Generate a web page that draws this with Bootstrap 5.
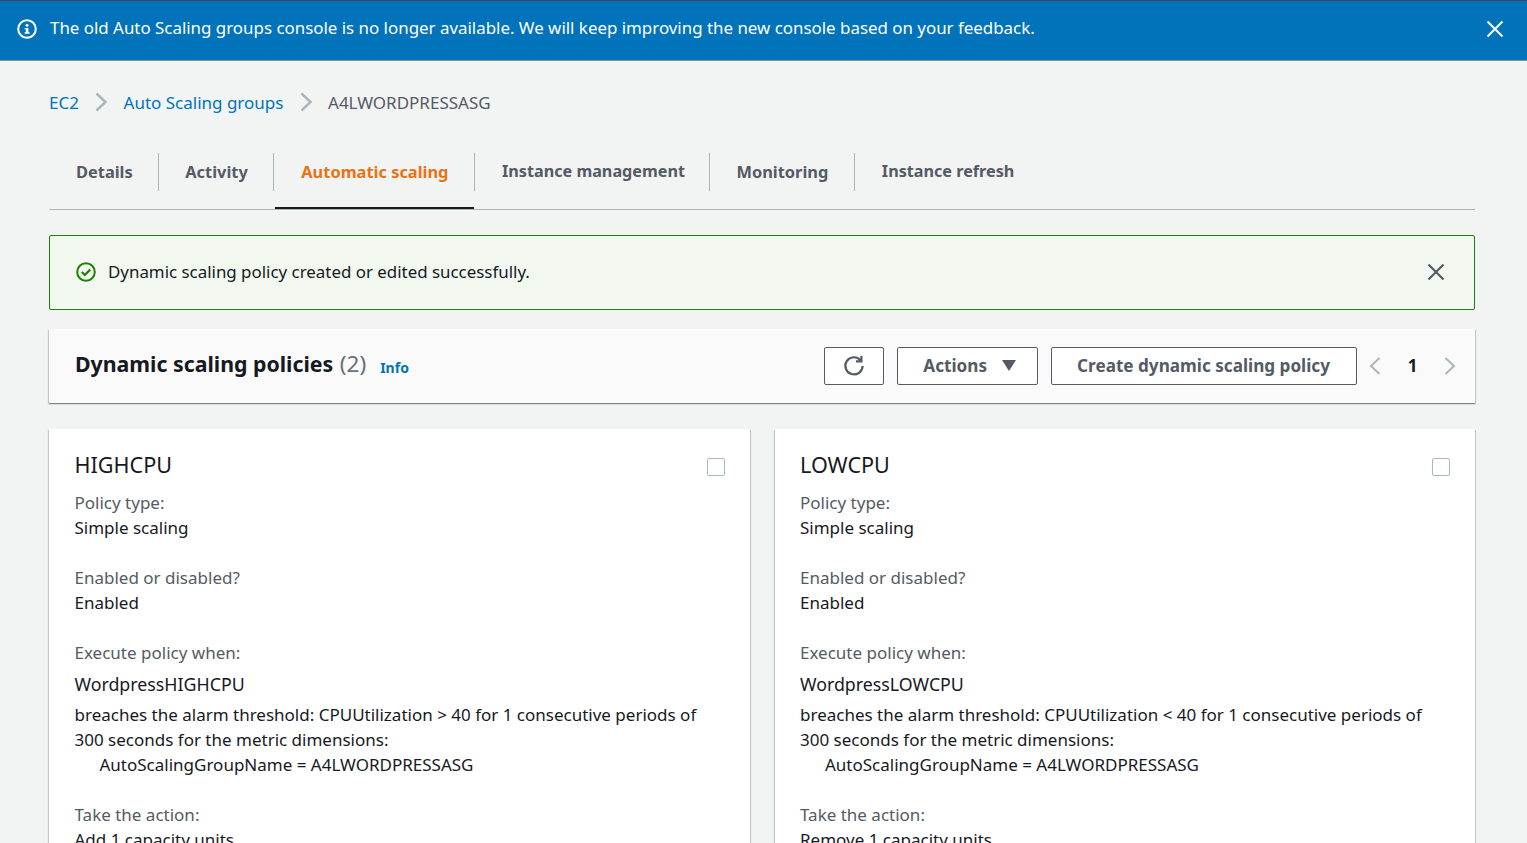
<!DOCTYPE html>
<html lang="en">

<head>
    <meta charset="UTF-8" />
    <meta name="viewport" content="width=device-width, initial-scale=1.0" />
    <title>A4LWORDPRESSASG - Auto Scaling groups</title>
    <link href="https://cdn.jsdelivr.net/npm/bootstrap@5.3.0/dist/css/bootstrap.min.css" rel="stylesheet">
    <style>
        html, body { height: 843px; overflow: hidden; }
        body { background: #f2f3f3; color: #16191f; font-family: "Noto Sans", "Liberation Sans", sans-serif; font-size: 17px; line-height: 25px; }
        .top-flash { height: 61px; background: #0073bb; border-top: 1px solid #414750; border-bottom: 1px solid #879596; color: #fff; padding: 0 23px 3px 17px; }
        .top-flash .msg { font-size: 16.9px; margin-left: 13px; padding-bottom: 3px; }
        .plain-x { background: none; border: 0; padding: 0; line-height: 0; }
        .page-wrap { padding: 0 52px 0 49px; }
        .crumbs { height: 84px; padding-bottom: 2px; font-size: 17px; }
        .crumbs a { color: #0073bb; text-decoration: none; }
        .crumbs .here { color: #545b64; }
        .crumbs svg { margin: 0 16.3px; }
        .tab-strip { height: 65px; border-bottom: 1px solid #aab7b8; padding-bottom: 18px; align-items: stretch; }
        .tab-item { position: relative; padding: 0 25.5px 2px 26px; font-weight: 700; color: #545b64; font-size: 16.4px; display: flex; align-items: center; border-left: 1px solid #aab7b8; margin-top: 8px; height: 38px; }
        .tab-item:first-child { border-left: 0; padding-left: 27px; }
        .tab-item.on { color: #ec7211; padding-left: 27px; }
        .tab-item.wide-name { font-size: 16.2px; padding-left: 27px; padding-right: 24.5px; }
        .tab-item.on::after { content: ""; position: absolute; left: 1px; right: 0; bottom: -18px; height: 2px; background: #16191f; }
        .ok-flash { height: 75px; margin-top: 25px; background: #f2f8f0; border: 1px solid #1d8102; border-radius: 2px; padding: 0 29px 2px 26px; }
        .ok-flash .msg { margin-left: 12px; font-size: 16.9px; }
        .policy-head { height: 74px; margin-top: 19px; background: #fafafa; box-shadow: 0 1px 1px 0 rgba(0,28,36,.3), 1px 1px 1px 0 rgba(0,28,36,.15), -1px 1px 1px 0 rgba(0,28,36,.15); padding: 0 19px 1px 26px; }
        .policy-head h2 { font-size: 21.3px; font-weight: 700; line-height: 30px; margin: 0 0 4px; }
        .policy-head h2 span { font-weight: 400; font-size: 22.5px; color: #687078; margin-left: 1px; }
        .info-link { color: #0073bb; font-size: 14px; font-weight: 700; text-decoration: none; margin-left: 14px; margin-top: 3px; }
        .head-tools { gap: 12.5px; }
        .btn.aws-btn { height: 38px; background: #fff; border: 1px solid #545b64; border-radius: 2px; color: #545b64; font-weight: 700; font-size: 17.15px; line-height: 1; padding: 0 25.5px; }
        .btn.aws-btn.reload { width: 60px; padding: 0; }
        .btn.aws-btn.drop { padding-right: 21px; }
        .btn.aws-btn.drop svg { margin-left: 15px; }
        .pager { width: 87px; color: #16191f; font-weight: 700; }
        .policy-grid { display: grid; grid-template-columns: 1fr 1fr; gap: 25px; margin-top: 26px; }
        .policy-card { background: #fff; border: 0; border-radius: 0; height: 500px; padding: 21px 25px 21px 25.5px; box-shadow: 0 1px 1px 0 rgba(0,28,36,.3), 1px 1px 1px 0 rgba(0,28,36,.15), -1px 1px 1px 0 rgba(0,28,36,.15); }
        .policy-card h3 { font-size: 21.6px; font-weight: 400; line-height: 30px; margin: 0; }
        .tick-box { width: 18px; height: 18px; border: 1px solid #aab7b8; border-radius: 2px; background: #fff; margin-top: 8px; }
        .lbl { color: #545b64; }
        .policy-card p { margin: 0; }
        .policy-card p.gap-top { margin-top: 25px; }
        .policy-card p.lbl-first { margin-top: 10px; }
        .policy-card p.alarm-name { margin-top: 6px; font-size: 17.8px; line-height: 26px; }
        .policy-card p.alarm-text { margin-top: 5px; }
        .indent { padding-left: 25px; }
    </style>
</head>

<body>

    <!-- Top banner -->
    <div class="top-flash d-flex align-items-center">
        <svg width="20" height="20" viewBox="0 0 20 20" fill="none">
            <circle cx="10" cy="10" r="8.8" stroke="#fff" stroke-width="2" />
            <rect x="8.8" y="9" width="2.6" height="5.2" fill="#fff" />
            <rect x="7.6" y="13.2" width="5" height="1.5" fill="#fff" />
            <rect x="7.6" y="9" width="2.5" height="1.3" fill="#fff" />
            <circle cx="10" cy="6.2" r="1.5" fill="#fff" />
        </svg>
        <div class="msg flex-grow-1">The old Auto Scaling groups console is no longer available. We will keep improving the new console based on your feedback.</div>
        <button class="plain-x" type="button" aria-label="Dismiss">
            <svg width="18" height="18" viewBox="0 0 18 18" fill="none" stroke="#f2f3f3" stroke-width="2.2">
                <path d="M1.5 1.5l15 15M16.5 1.5l-15 15" />
            </svg>
        </button>
    </div>

    <div class="page-wrap">
        <!-- Breadcrumb -->
        <div class="crumbs d-flex align-items-center">
            <a href="#">EC2</a>
            <svg width="12" height="20" viewBox="0 0 12 20" fill="none" stroke="#aab7b8" stroke-width="2.5"><path d="M1.500 1.500l9 8.500-9 8.500" /></svg>
            <a href="#">Auto Scaling groups</a>
            <svg width="12" height="20" viewBox="0 0 12 20" fill="none" stroke="#aab7b8" stroke-width="2.5"><path d="M1.500 1.500l9 8.500-9 8.500" /></svg>
            <span class="here">A4LWORDPRESSASG</span>
        </div>

        <!-- Tabs -->
        <div class="tab-strip d-flex">
            <div class="tab-item">Details</div>
            <div class="tab-item">Activity</div>
            <div class="tab-item on">Automatic scaling</div>
            <div class="tab-item wide-name">Instance management</div>
            <div class="tab-item">Monitoring</div>
            <div class="tab-item wide-name">Instance refresh</div>
        </div>

        <!-- Success message -->
        <div class="ok-flash d-flex align-items-center">
            <svg width="20" height="20" viewBox="0 0 20 20" fill="none" stroke="#1d8102" stroke-width="2">
                <circle cx="10" cy="10" r="8.8" />
                <path d="M5.800 10l3 3 5.400-5.400" stroke-width="2.200" />
            </svg>
            <div class="msg flex-grow-1">Dynamic scaling policy created or edited successfully.</div>
            <button class="plain-x" type="button" aria-label="Dismiss">
                <svg width="18" height="18" viewBox="0 0 18 18" fill="none" stroke="#545b64" stroke-width="2.2">
                    <path d="M1.5 1.5l15 15M16.5 1.5l-15 15" />
                </svg>
            </button>
        </div>

        <!-- Policies header -->
        <div class="policy-head d-flex align-items-center">
            <h2>Dynamic scaling policies <span>(2)</span></h2>
            <a href="#" class="info-link">Info</a>
            <div class="ms-auto head-tools d-flex align-items-center">
                <button class="btn aws-btn reload d-flex align-items-center justify-content-center" type="button" aria-label="Refresh">
                    <svg width="22" height="22" viewBox="0 0 22 22" fill="none" stroke="#545b64" stroke-width="2.2">
                        <path d="M17.500 5.200A8.600 8.600 0 1 0 19.600 11" />
                        <path d="M18.400 1v5.400H13" />
                    </svg>
                </button>
                <button class="btn aws-btn drop d-flex align-items-center" type="button">Actions
                    <svg width="14" height="11" viewBox="0 0 14 11" fill="#545b64"><path d="M0 0h14L7 11z" /></svg>
                </button>
                <button class="btn aws-btn" type="button">Create dynamic scaling policy</button>
                <div class="pager d-flex align-items-center justify-content-between">
                    <svg width="12" height="18" viewBox="0 0 12 18" fill="none" stroke="#aab7b8" stroke-width="2"><path d="M10.500 1L2 9l8.500 8" /></svg>
                    <span>1</span>
                    <svg width="12" height="18" viewBox="0 0 12 18" fill="none" stroke="#aab7b8" stroke-width="2"><path d="M1.500 1L10 9l-8.500 8" /></svg>
                </div>
            </div>
        </div>

        <!-- Policy cards -->
        <div class="policy-grid" id="policyGrid"></div>
    </div>

    <script>
        const policies = [
            { name: "HIGHCPU", alarm: "WordpressHIGHCPU", op: "&gt;", action: "Add 1 capacity units" },
            { name: "LOWCPU", alarm: "WordpressLOWCPU", op: "&lt;", action: "Remove 1 capacity units" },
        ];

        document.getElementById("policyGrid").innerHTML = policies.map(p => `
            <div class="card policy-card">
                <div class="d-flex justify-content-between">
                    <h3>${p.name}</h3>
                    <div class="tick-box"></div>
                </div>
                <p class="lbl lbl-first">Policy type:</p>
                <p>Simple scaling</p>
                <p class="lbl gap-top">Enabled or disabled?</p>
                <p>Enabled</p>
                <p class="lbl gap-top">Execute policy when:</p>
                <p class="alarm-name">${p.alarm}</p>
                <p class="alarm-text">breaches the alarm threshold: CPUUtilization ${p.op} 40 for 1 consecutive periods of 300 seconds for the metric dimensions:</p>
                <p class="indent">AutoScalingGroupName = A4LWORDPRESSASG</p>
                <p class="lbl gap-top">Take the action:</p>
                <p>${p.action}</p>
            </div>`).join("");
    </script>
    <script src="https://cdn.jsdelivr.net/npm/bootstrap@5.3.0/dist/js/bootstrap.bundle.min.js"></script>
</body>

</html>
